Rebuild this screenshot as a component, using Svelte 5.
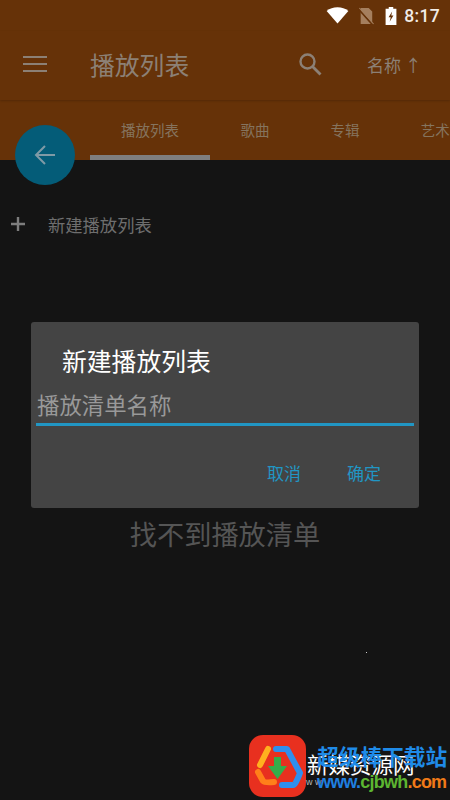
<script>
  const tabs = [
    { label: "播放列表", width: 120, active: true },
    { label: "歌曲", width: 90 },
    { label: "专辑", width: 90 },
    { label: "艺术家", width: 105 },
  ];
</script>

<div class="screen">
  <header class="top">
    <div class="status">
      <svg class="wifi" viewBox="0 0 24 18" width="23" height="17">
        <path d="M12 17.500 0.500 4.200C3.600 1.700 7.600 0.300 12 0.300s8.400 1.400 11.500 3.900z" fill="#fff" />
      </svg>
      <svg class="sim" viewBox="0 0 18 20" width="16" height="18">
        <path d="M3 1h9l4 4v14H3z" fill="#a57f5e" />
        <path d="M0.500 2 16.500 20" stroke="#663208" stroke-width="2" />
        <path d="M1.500 1 17.500 19" stroke="#a57f5e" stroke-width="1.200" />
      </svg>
      <svg class="battery" viewBox="0 0 13 20" width="12" height="18">
        <path d="M4 0h5v2h3.500v18H.5V2H4z" fill="#fff" />
        <path d="M7.800 5 3.800 11.500h2.400L5 16.500l4.200-7H6.800z" fill="#663208" />
      </svg>
      <span class="time">8:17</span>
    </div>

    <div class="bar">
      <svg class="menu" viewBox="0 0 24 18" width="24" height="18">
        <path d="M0 2h24M0 9h24M0 16h24" stroke="#8c8075" stroke-width="2.200" />
      </svg>
      <h1>播放列表</h1>
      <svg class="search" viewBox="0 0 24 24" width="24" height="24">
        <circle cx="9.500" cy="9.500" r="7" fill="none" stroke="#8c8075" stroke-width="2.400" />
        <path d="M14.500 14.500 22.500 22.500" stroke="#8c8075" stroke-width="2.800" />
      </svg>
      <span class="sort">名称 ↑</span>
    </div>

    <nav class="tabs">
      {#each tabs as tab}
        <div class="tab" class:active={tab.active} style="width: {tab.width}px">{tab.label}</div>
      {/each}
    </nav>
  </header>

  <main class="body">
    <div class="new-row">
      <svg viewBox="0 0 16 16" width="16" height="16">
        <path d="M8 1v14M1 8h14" stroke="#7d7d7d" stroke-width="2.400" />
      </svg>
      <span>新建播放列表</span>
    </div>
    <p class="empty">找不到播放清单</p>
  </main>

  <button class="fab" aria-label="返回">
    <svg viewBox="0 0 24 24" width="24" height="24">
      <path d="M22 12H3M12 3l-9 9 9 9" fill="none" stroke="#7f9aa6" stroke-width="2" />
    </svg>
  </button>

  <div class="dialog">
    <h2>新建播放列表</h2>
    <div class="field">播放清单名称</div>
    <div class="actions">
      <span>取消</span>
      <span>确定</span>
    </div>
  </div>

  <span class="speck"></span>

  <div class="mark">
    <div class="logo">
      <svg viewBox="0 0 57 62" width="57" height="62">
        <g fill="none" stroke-width="6" stroke-linecap="round" stroke-linejoin="round">
          <path d="M19 14 11 30" stroke="#ffb01f" />
          <path d="M9 37 14 46Q16 48 25 47" stroke="#ff7f1a" />
          <path d="M27 14H38L51 38Q46 51 44 50H33" stroke="#2f8fee" />
        </g>
        <path d="M25 22h7v9h6L28.500 44 19 31h6z" fill="#35ad4a" />
      </svg>
    </div>
    <div class="under">新媒资源网</div>
    <div class="under-url">w w</div>
    <div class="brand">超级棒下载站</div>
    <div class="url">www.<em>cjbwh</em><b>.com</b></div>
  </div>
</div>

<style>
  :global(body) {
    background: #141414;
  }

  .screen {
    position: relative;
    width: 450px;
    height: 800px;
    overflow: hidden;
    background: #141414;
    font-family: "Noto Sans CJK SC", Roboto, sans-serif;
  }

  .top {
    background: #663208;
    height: 160px;
  }

  .status {
    height: 31px;
    display: flex;
    align-items: center;
    justify-content: flex-end;
    padding: 0 10px 0 0;
    box-sizing: border-box;
  }

  .sim {
    margin-left: 9px;
  }

  .battery {
    margin-left: 11px;
  }

  .time {
    margin-left: 7px;
    font-family: Roboto, sans-serif;
    font-size: 17.500px;
    font-weight: 500;
    color: #f2ece6;
    letter-spacing: 0.300px;
  }

  .bar {
    height: 69px;
    box-sizing: border-box;
    padding: 0 0 3px 23px;
    display: flex;
    align-items: center;
    box-shadow: 0 1px 2px rgba(0, 0, 0, 0.18);
  }

  .bar h1 {
    margin: 0 0 0 43px;
    width: 208px;
    font-size: 24.800px;
    font-weight: 400;
    color: #8c8075;
  }

  .sort {
    margin-left: 45px;
    font-size: 17px;
    color: #8c8075;
    white-space: nowrap;
  }

  .tabs {
    height: 60px;
    display: flex;
    padding-left: 90px;
  }

  .tab {
    flex: none;
    box-sizing: border-box;
    padding-top: 18px;
    text-align: center;
    font-size: 14.500px;
    line-height: 24px;
    color: #85745f;
    white-space: nowrap;
  }

  .tab.active {
    border-bottom: 5px solid #7f7f7f;
  }

  .body {
    padding-top: 51px;
  }

  .new-row {
    display: flex;
    align-items: center;
    gap: 22px;
    padding-left: 10px;
    height: 26px;
    font-size: 17.300px;
    color: #6e6e6e;
  }

  .empty {
    margin: 278px 0 0;
    text-align: center;
    font-size: 27.200px;
    line-height: 36px;
    color: #555;
  }

  .fab {
    position: absolute;
    left: 15px;
    top: 125px;
    width: 60px;
    height: 60px;
    padding: 0;
    border: none;
    border-radius: 50%;
    background: #045c78;
    display: flex;
    align-items: center;
    justify-content: center;
  }

  .dialog {
    position: absolute;
    left: 31px;
    top: 322px;
    width: 388px;
    height: 186px;
    box-sizing: border-box;
    padding: 18px 5px 0;
    border-radius: 3px;
    background: #444;
  }

  .dialog h2 {
    margin: 0 0 0 26px;
    font-size: 24.800px;
    line-height: 40px;
    font-weight: 400;
    color: #fff;
  }

  .field {
    margin-top: 4px;
    height: 39px;
    padding-left: 1px;
    border-bottom: 3px solid #2196c4;
    font-size: 22.400px;
    line-height: 40px;
    color: #999;
  }

  .actions {
    display: flex;
    justify-content: flex-end;
    gap: 46px;
    padding: 35px 33px 0 0;
    font-size: 17px;
    line-height: 24px;
    color: #2196c4;
  }

  .speck {
    position: absolute;
    left: 366px;
    top: 652px;
    width: 1px;
    height: 1px;
    background: #ccc;
  }

  .mark {
    position: absolute;
    left: 249px;
    top: 735px;
    width: 201px;
    height: 65px;
  }

  .logo {
    position: absolute;
    left: 0;
    top: 0;
    width: 57px;
    height: 62px;
    border-radius: 14px;
    background: #e8301f;
  }

  .under {
    position: absolute;
    left: 58px;
    top: 14px;
    font-size: 21.500px;
    line-height: 30px;
    color: #fff;
    white-space: nowrap;
  }

  .under-url {
    position: absolute;
    left: 57px;
    top: 41px;
    font-family: "Liberation Sans", sans-serif;
    font-size: 9px;
    line-height: 12px;
    color: #bbb;
    white-space: nowrap;
  }

  .brand {
    position: absolute;
    left: 68px;
    top: 6px;
    font-size: 21.700px;
    font-weight: 700;
    line-height: 30px;
    color: #1f8be8;
    white-space: nowrap;
  }

  .url {
    position: absolute;
    left: 68px;
    top: 36px;
    font-family: "Liberation Sans", sans-serif;
    font-size: 18px;
    font-weight: 700;
    line-height: 22px;
    letter-spacing: -0.770px;
    color: #1f7fe0;
    white-space: nowrap;
  }

  .url em {
    font-style: normal;
    color: #5cb531;
  }

  .url b {
    color: #f07a18;
  }
</style>
